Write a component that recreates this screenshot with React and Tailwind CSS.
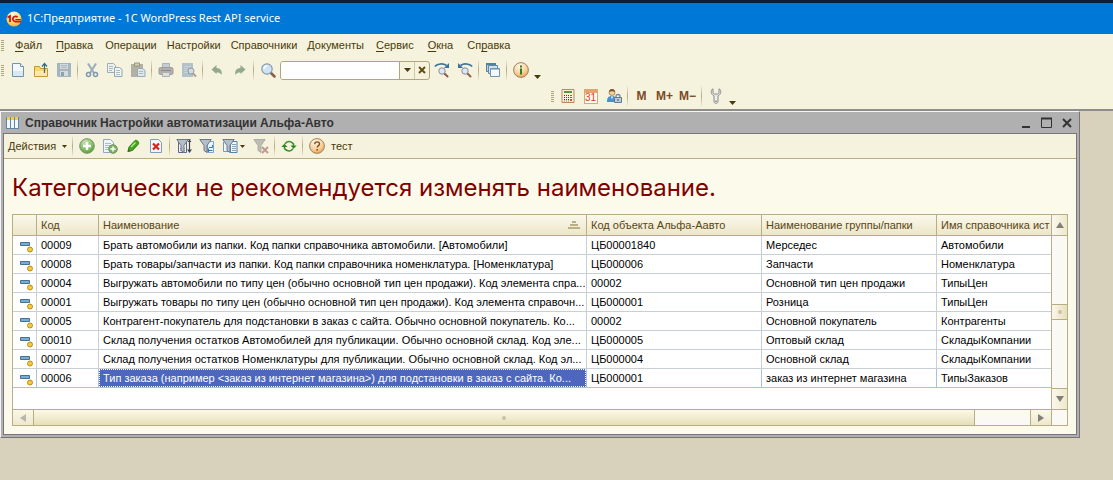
import clsx from "clsx";

const MENU = [
  { before: "", key: "Ф", after: "айл" },
  { before: "", key: "П", after: "равка" },
  { before: "Операции" },
  { before: "Настройки" },
  { before: "Справочники" },
  { before: "Документы" },
  { before: "", key: "С", after: "ервис" },
  { before: "", key: "О", after: "кна" },
  { before: "Сп", key: "р", after: "авка" },
];

const ROWS = [
  ["00009", "Брать автомобили из папки. Код папки справочника автомобили. [Автомобили]", "ЦБ00001840", "Мерседес", "Автомобили"],
  ["00008", "Брать товары/запчасти из папки. Код папки справочника номенклатура. [Номенклатура]", "ЦБ000006", "Запчасти", "Номенклатура"],
  ["00004", "Выгружать автомобили по типу цен (обычно основной тип цен продажи). Код элемента спра...", "00002", "Основной тип цен продажи", "ТипыЦен"],
  ["00001", "Выгружать товары по типу цен (обычно основной тип цен продажи). Код элемента справочн...", "ЦБ000001", "Розница", "ТипыЦен"],
  ["00005", "Контрагент-покупатель для подстановки в заказ с сайта. Обычно основной покупатель. Ко...", "00002", "Основной покупатель", "Контрагенты"],
  ["00010", "Склад получения остатков Автомобилей для публикации. Обычно основной склад. Код эле...", "ЦБ000005", "Оптовый склад", "СкладыКомпании"],
  ["00007", "Склад получения остатков Номенклатуры для публикации. Обычно основной склад. Код эл...", "ЦБ000004", "Основной склад", "СкладыКомпании"],
  ["00006", "Тип заказа (например <заказ из интернет магазина>) для подстановки в заказ с сайта. Ко...", "ЦБ000001", "заказ из интернет магазина", "ТипыЗаказов"],
];

const SELECTED = "00006";

/* ---------- icons, all on a 16x16 grid ---------- */

function Icon({ children, className }) {
  return (
    <svg viewBox="0 0 16 16" className={clsx("h-4 w-4 shrink-0", className)} fill="none" aria-hidden="true">
      {children}
    </svg>
  );
}

const Caret = () => (
  <svg viewBox="0 0 7 4" className="h-1 w-[7px] shrink-0" aria-hidden="true">
    <path d="M0 0h7L3.500 4z" fill="#4a3a0a" />
  </svg>
);

const SmallCaret = () => (
  <svg viewBox="0 0 5 3" className="h-[3px] w-[5px] shrink-0" aria-hidden="true">
    <path d="M0 0h5L2.500 3z" fill="#4a3a0a" />
  </svg>
);

const NewIcon = () => (
  <Icon>
    <path d="M2.500 1.500h8l3 3v10h-11z" fill="#f3f8fc" stroke="#6f93b1" />
    <path d="M3 9h10v5H3z" fill="#dbe8f3" />
    <path d="M10.500 1.500v3h3" fill="#fff" stroke="#6f93b1" />
  </Icon>
);

const OpenIcon = () => (
  <Icon>
    <path d="M1.500 14.500v-10h5l1 2h7v8z" fill="#f5d778" stroke="#c2983c" />
    <path d="M2 9h12v5H2z" fill="#fbe9a5" />
    <path d="M11.500 11V2M9 4.500l2.500-3 2.500 3" stroke="#34698c" strokeWidth="1.200" />
  </Icon>
);

const SaveIcon = () => (
  <Icon>
    <path d="M1 1h14v14H2l-1-1z" fill="#a4b5bf" />
    <path d="M4 2h8v5H4z" fill="#d3dbdb" />
    <path d="M5 3.500h6M5 5.500h6" stroke="#a4b5bf" />
    <path d="M4 9h8v5H4z" fill="#d3dbdb" />
    <path d="M5 10h3v4H5z" fill="#8fa2ab" />
  </Icon>
);

const CutIcon = () => (
  <Icon>
    <path d="M4 1.500l6 9.500M12 1.500L6 11" stroke="#9bb0be" strokeWidth="2.200" />
    <circle cx="4.500" cy="12.500" r="2" stroke="#7f99af" strokeWidth="1.500" />
    <circle cx="11.500" cy="12.500" r="2" stroke="#7f99af" strokeWidth="1.500" />
  </Icon>
);

const CopyIcon = () => (
  <Icon>
    <path d="M.5 1.500h6l2 2v7h-8z" fill="#edf0eb" stroke="#9bb0bd" />
    <path d="M2 4.500h4M2 6.500h4M2 8.500h3" stroke="#a9bbc5" />
    <path d="M7.500 5.500h5l2.500 2v7H7.500z" fill="#f2f4ef" stroke="#91a8b7" />
    <path d="M9 8.500h4M9 10.500h4M9 12.500h4" stroke="#a9bbc5" />
  </Icon>
);

const PasteIcon = () => (
  <Icon>
    <path d="M1 2h12v13H1z" fill="#b1b1a4" />
    <path d="M4.500 1h5v3h-5z" fill="#d6d3b4" stroke="#96937a" />
    <path d="M7.500 6.500h5l2.500 2v6H7.500z" fill="#dee6e8" stroke="#94abb9" />
    <path d="M9 9.500h4M9 11.500h4" stroke="#a9bbc5" />
  </Icon>
);

const PrintIcon = () => (
  <Icon>
    <path d="M4.500 6V1.500h7V6" fill="#c3ced4" stroke="#a9b3b7" />
    <rect x="1" y="5.500" width="14" height="7" rx="1.500" fill="#b4aeaa" stroke="#a29c98" />
    <path d="M3 8.500h10" stroke="#8f8a85" />
    <path d="M4.500 10.500h7v4h-7z" fill="#dcdfda" stroke="#a9b3b7" />
  </Icon>
);

const PreviewIcon = () => (
  <Icon>
    <path d="M1 1h11v14H1z" fill="#b3c1ca" />
    <path d="M3 4.500h7M3 6.500h4M3 8.500h3M3 10.500h4" stroke="#c9d3d6" />
    <circle cx="10" cy="9" r="3" fill="#d2dcdf" stroke="#8d9ca6" />
    <path d="M12 11.500l3 3" stroke="#b39c8c" strokeWidth="2" />
  </Icon>
);

const UndoIcon = () => (
  <Icon>
    <path d="M2.500 7.500l5-4.500v3c4 .2 6 3 5 7-1-2-2.500-2.500-5-2.500V12z" fill="#93a98c" />
  </Icon>
);

const RedoIcon = () => (
  <Icon>
    <path d="M13.500 7.500l-5-4.500v3c-4 .2-6 3-5 7 1-2 2.500-2.500 5-2.500V12z" fill="#93a98c" />
  </Icon>
);

const SearchIcon = () => (
  <Icon>
    <path d="M10.500 10.500l4 4" stroke="#8b5f45" strokeWidth="2.500" strokeLinecap="round" />
    <circle cx="7" cy="7" r="5.200" fill="#cfe3f6" stroke="#8a98ad" strokeWidth="1.200" />
    <path d="M4 7a3 3 0 013-3" stroke="#fff" strokeWidth="1.500" />
  </Icon>
);

const FindNextIcon = () => (
  <Icon>
    <path d="M10.500 11.500l3 3" stroke="#8b5f45" strokeWidth="2" strokeLinecap="round" />
    <circle cx="8" cy="9" r="3.200" fill="#dbe9f6" stroke="#8d8a99" />
    <path d="M.8 4.500C3.500 1.500 9 1 12.500 3.500" stroke="#38729a" strokeWidth="1.600" />
    <path d="M15 1v5h-5z" fill="#38729a" />
  </Icon>
);

const FindPrevIcon = () => (
  <Icon>
    <path d="M10.500 11.500l3 3" stroke="#8b5f45" strokeWidth="2" strokeLinecap="round" />
    <circle cx="8" cy="9" r="3.200" fill="#dbe9f6" stroke="#8d8a99" />
    <path d="M15.200 4.500C12.500 1.500 7 1 3.500 3.500" stroke="#38729a" strokeWidth="1.600" />
    <path d="M1 1v5h5z" fill="#38729a" />
  </Icon>
);

const WindowsIcon = () => (
  <Icon>
    <path d="M1.500 1.500h9v8h-9z" fill="#b9cfe0" stroke="#54809f" />
    <path d="M1 1h10v2H1z" fill="#54809f" />
    <path d="M3.500 3.500h9v8h-9z" fill="#d3e1ec" stroke="#5f88a6" />
    <path d="M5.500 6.500h9v8h-9z" fill="#f6f9fc" stroke="#6f94b0" />
    <path d="M6 7.500h8" stroke="#a9c5da" />
  </Icon>
);

const AmberDisc = ({ id }) => (
  <>
    <defs>
      <radialGradient id={id} cx="0.4" cy="0.25" r="0.8">
        <stop offset="0" stopColor="#fff8e8" />
        <stop offset="0.6" stopColor="#f9d09a" />
        <stop offset="1" stopColor="#ee9f4e" />
      </radialGradient>
    </defs>
    <circle cx="8" cy="8" r="7.400" fill={`url(#${id})`} stroke="#9c8468" />
  </>
);

const InfoIcon = () => (
  <Icon>
    <AmberDisc id="amber-info" />
    <path d="M7 6.500h2v6H7zM7 3.500h2v2H7z" fill="#2f7d22" />
  </Icon>
);

const CalcIcon = () => (
  <Icon>
    <path d="M2 1.500h12v13H2z" fill="#faf0da" stroke="#b58a5e" />
    <path d="M4 3h8v2H4z" fill="#4f9b44" />
    <path d="M4 7.500h5M4 9.500h5M4 11.500h5" stroke="#4a3d30" strokeDasharray="1 1" />
    <path d="M4 13h5" stroke="#8a7a68" strokeDasharray="1 1" />
    <path d="M10 7.500h2M10 9.500h2" stroke="#3c8d37" />
    <path d="M10 12h2" stroke="#d4512b" strokeWidth="2" />
  </Icon>
);

const CalendarIcon = () => (
  <span className="flex h-[15px] w-[14px] flex-col overflow-hidden border border-[#d7a879] bg-[#fffaf0]">
    <span className="h-[3px] shrink-0 bg-[#e8a36c]" />
    <span className="text-center text-[10px] leading-[10px] text-[#de3a1c]">31</span>
  </span>
);

const UserIcon = () => (
  <Icon>
    <circle cx="6" cy="4.500" r="3" fill="#f3cf9b" stroke="#a07a4c" strokeWidth=".8" />
    <path d="M3 4c0-4 6-4 6 0-2-1-4-1-6 0z" fill="#7b552c" />
    <path d="M1 14c0-4 1-6 5-6s4 2 4 6z" fill="#4a8fc7" />
    <path d="M5 8.500h2l-1 3z" fill="#fff" />
    <path d="M10 10V8.500a2 2 0 014 0V10" stroke="#7b8893" strokeWidth="1.300" />
    <path d="M8.500 9.500h7v5h-7z" fill="#bccbd8" stroke="#647b8f" />
    <path d="M12 11v2" stroke="#40556a" />
  </Icon>
);

const WrenchIcon = () => (
  <Icon>
    <path
      d="M5 .8C3 1.500 2.500 5 4.500 6.800L6 8v5.500c0 2.500 4 2.500 4 0V8l1.500-1.200C13.500 5 13 1.500 11 .8v4L9.500 6h-3L5 4.800z"
      fill="#e2e2e0"
      stroke="#8d8d8d"
    />
    <path d="M8 8v4" stroke="#fff" />
    <circle cx="8" cy="13.200" r=".8" fill="#777" />
  </Icon>
);

const AddIcon = () => (
  <Icon>
    <defs>
      <radialGradient id="leaf" cx="0.4" cy="0.25" r="0.8">
        <stop offset="0" stopColor="#c9e6b4" />
        <stop offset="0.7" stopColor="#77b856" />
        <stop offset="1" stopColor="#559a3a" />
      </radialGradient>
    </defs>
    <circle cx="8" cy="8" r="7.300" fill="url(#leaf)" stroke="#7b8f72" />
    <path d="M4 8h8M8 4v8" stroke="#fff" strokeWidth="2.400" />
  </Icon>
);

const AddCopyIcon = () => (
  <Icon>
    <path d="M1.500 1.500h7l3 3v10h-10z" fill="#f2f6f9" stroke="#93a9ba" />
    <path d="M3 5.500h6M3 7.500h6M3 9.500h4M3 11.500h3" stroke="#a9bccb" />
    <circle cx="11" cy="11" r="4.300" fill="#77b856" stroke="#7b8f72" />
    <path d="M8.500 11h5M11 8.500v5" stroke="#fff" strokeWidth="1.500" />
  </Icon>
);

const PencilIcon = () => (
  <Icon>
    <path d="M3 13.500l1-4.500 6-6.500c1.500-1 4.500 1.500 3.500 3.500L7.500 12.500z" fill="#46a51f" stroke="#2d8412" />
    <path d="M6 9l4.500-4.500" stroke="#b4e88c" strokeWidth="1.500" />
    <path d="M2.500 14l1-3L5.500 13z" fill="#554" />
  </Icon>
);

const DeleteIcon = () => (
  <Icon>
    <path d="M2.500 1.500h8l3 3v10h-11z" fill="#f2f6f9" stroke="#7d9db8" />
    <path d="M5 5.500l6 6M11 5.500l-6 6" stroke="#d5231b" strokeWidth="2.200" />
  </Icon>
);

const Funnel = ({ fill = "#b4bec8", stroke = "#6c7a88" }) => (
  <path d="M.8 1.500h11.400L8 7.500v7L5 12.500v-5z" fill={fill} stroke={stroke} />
);

const FilterSetIcon = () => (
  <Icon>
    <path d="M2.500 3v11.500h8V3" fill="#eef2f5" stroke="#5b6b7a" />
    <path d="M4 10.500h5M4 12.500h5" stroke="#8fa1b0" />
    <path d="M1 1.500h13.500" stroke="#4d5b69" />
    <Funnel />
    <path d="M13.500 3v10" stroke="#3a4856" strokeWidth="1.200" />
    <path d="M11 11.500h5L13.500 15zM11.500 4h4l-2-2.500z" fill="#3a4856" />
  </Icon>
);

const FilterCurrentIcon = () => (
  <Icon>
    <path d="M8.500 3.500h6v11h-6z" fill="#eaf3fa" stroke="#7fa6c4" />
    <Funnel />
    <path d="M10 9.500h3.500M9.500 12.500h4" stroke="#2e7bb5" />
    <path d="M13.500 7v2.500M9.500 10.500v3.500" stroke="#2e7bb5" />
  </Icon>
);

const FilterHistoryIcon = () => (
  <Icon>
    <path d="M1.500 4v9.500h6V4" fill="#eef4f9" stroke="#7c98ad" />
    <path d="M8.500 3.500h6.500v11H8.500z" fill="#f3f8fc" stroke="#4f83ab" />
    <path d="M10 6.500h4M10 8.500h4M10 10.500h4M10 12.500h4" stroke="#7fa3be" />
    <Funnel />
  </Icon>
);

const FilterOffIcon = () => (
  <Icon>
    <Funnel fill="#bdbdb6" stroke="#aeaea6" />
    <path d="M9 9l6 6M15 9l-6 6" stroke="#c09a92" strokeWidth="2" />
  </Icon>
);

const RefreshIcon = () => (
  <Icon>
    <path d="M4 6c1.500-3 6-3.500 8.500 0v2M12 10.500c-1.500 3-6 3.500-8.500 0v-2" stroke="#3b8f2c" strokeWidth="1.600" />
    <path d="M9.500 7.500h6.200l-3.100 3.300zM.3 9h6.200L3.400 5.700z" fill="#2c8a1d" />
  </Icon>
);

const HelpIcon = () => (
  <Icon>
    <AmberDisc id="amber-help" />
    <path d="M5.700 6.200c0-3 4.800-3 4.800-.3 0 1.700-2.300 1.700-2.300 3.600" stroke="#7a5220" strokeWidth="1.400" />
    <path d="M7.400 11h1.600v1.500H7.400z" fill="#7a5220" />
  </Icon>
);

const RowIcon = () => (
  <svg viewBox="0 0 14 12" className="mt-[3px] ml-[7px] block h-3 w-[14px]" aria-hidden="true">
    <path d="M.5 1.500h9v3h-9z" fill="#78add6" stroke="#46708f" />
    <circle cx="10" cy="8.500" r="2.500" fill="#f6c93c" stroke="#b98d1a" />
  </svg>
);

const AppLogo = () => (
  <svg viewBox="0 0 16 16" className="h-4 w-4 shrink-0" aria-hidden="true">
    <defs>
      <radialGradient id="sun" cx="0.45" cy="0.2" r="0.9">
        <stop offset="0" stopColor="#fffbe0" />
        <stop offset="0.6" stopColor="#fbd95f" />
        <stop offset="1" stopColor="#ee9c2c" />
      </radialGradient>
    </defs>
    <circle cx="8" cy="8" r="7.500" fill="url(#sun)" />
    <path d="M1.500 6.500L4 5v6" fill="none" stroke="#d8151b" strokeWidth="1.800" />
    <path d="M11.500 6.300a2.600 2.600 0 10-2.300 4.200H15" fill="none" stroke="#d8151b" strokeWidth="1.800" />
    <path d="M9.300 8.500H15" stroke="#d8151b" />
  </svg>
);

const TableIcon = () => (
  <svg viewBox="0 0 13 12" className="h-3 w-[13px] shrink-0" aria-hidden="true">
    <path d="M0 0h13v12H0z" fill="#5f86a6" />
    <path d="M1 3h3v8H1zM5 3h3v8H5zM9 3h3v8H9z" fill="#f1f7fb" />
    <path d="M1 0h3v3H1zM5 0h3v3H5zM9 0h3v3H9z" fill="#f4cf4c" />
  </svg>
);

/* ---------- toolbar pieces ---------- */

const Grip = () => (
  <span className="mr-[2px] flex h-[11px] w-[3px] shrink-0 flex-col justify-between">
    {[0, 1, 2, 3, 4, 5].map((n) => (
      <span key={n} className="h-px bg-[#b0a67c]" />
    ))}
  </span>
);

const Separator = () => (
  <span className="flex h-[22px] w-[5px] shrink-0 justify-center">
    <span className="w-px bg-linear-to-b from-[#f5f2dd] via-[#b5ab84] to-[#f5f2dd]" />
  </span>
);

function ToolButton({ label, icon: Glyph, disabled }) {
  return (
    <button
      type="button"
      aria-label={label}
      disabled={disabled}
      className="flex h-[22px] w-[23px] shrink-0 items-center justify-center"
    >
      <Glyph />
    </button>
  );
}

const MemoryButton = ({ text }) => (
  <button
    type="button"
    className="flex h-[22px] w-[23px] shrink-0 items-center justify-center text-[12px] font-bold text-[#7a4a26]"
  >
    {text}
  </button>
);

const MoreButton = () => (
  <button type="button" aria-label="Ещё" className="flex h-[22px] w-[11px] shrink-0 items-end justify-center pb-[2px]">
    <Caret />
  </button>
);

function MainToolbar() {
  return (
    <div className="flex h-[26px] items-center pl-px">
      <Grip />
      <ToolButton label="Новый" icon={NewIcon} />
      <ToolButton label="Открыть" icon={OpenIcon} />
      <ToolButton label="Сохранить" icon={SaveIcon} disabled />
      <Separator />
      <ToolButton label="Вырезать" icon={CutIcon} disabled />
      <ToolButton label="Копировать" icon={CopyIcon} disabled />
      <ToolButton label="Вставить" icon={PasteIcon} disabled />
      <Separator />
      <ToolButton label="Печать" icon={PrintIcon} disabled />
      <ToolButton label="Просмотр" icon={PreviewIcon} disabled />
      <Separator />
      <ToolButton label="Отменить" icon={UndoIcon} disabled />
      <ToolButton label="Вернуть" icon={RedoIcon} disabled />
      <Separator />
      <ToolButton label="Найти" icon={SearchIcon} />
      <div className="ml-px flex h-[19px] w-[150px] shrink-0 overflow-hidden rounded-[3px] border border-[#b0a67c] bg-[#f5f2dd]">
        <input type="text" aria-label="Строка поиска" className="w-0 flex-1 bg-white px-1 text-[11px] outline-none" />
        <button type="button" aria-label="Список" className="flex w-[15px] items-center justify-center border-l border-[#b0a67c]">
          <Caret />
        </button>
        <button type="button" aria-label="Очистить" className="flex w-[15px] items-center justify-center border-l border-[#cfc8a4]">
          <svg viewBox="0 0 8 8" className="h-2 w-2" aria-hidden="true">
            <path d="M1 1l6 6M7 1L1 7" stroke="#5a4a0c" strokeWidth="1.800" />
          </svg>
        </button>
      </div>
      <ToolButton label="Найти следующее" icon={FindNextIcon} />
      <ToolButton label="Найти предыдущее" icon={FindPrevIcon} />
      <Separator />
      <ToolButton label="Окна" icon={WindowsIcon} />
      <Separator />
      <ToolButton label="О программе" icon={InfoIcon} />
      <MoreButton />
    </div>
  );
}

function ServiceToolbar() {
  return (
    <div className="flex h-[26px] items-center pl-[551px]">
      <Grip />
      <ToolButton label="Калькулятор" icon={CalcIcon} />
      <ToolButton label="Календарь" icon={CalendarIcon} />
      <ToolButton label="Пользователь" icon={UserIcon} />
      <Separator />
      <MemoryButton text="M" />
      <MemoryButton text="M+" />
      <MemoryButton text="M−" />
      <Separator />
      <ToolButton label="Сервис" icon={WrenchIcon} />
      <MoreButton />
    </div>
  );
}

function ListToolbar() {
  return (
    <div className="flex h-[25px] items-center border-b border-[#b8ad84] bg-[#f5f2dd] pl-1 text-[11px] text-[#4a3a0a]">
      <button type="button" className="flex w-[62px] shrink-0 items-center justify-between pr-[3px]">
        Действия
        <SmallCaret />
      </button>
      <Separator />
      <ToolButton label="Добавить" icon={AddIcon} />
      <ToolButton label="Добавить копированием" icon={AddCopyIcon} />
      <ToolButton label="Изменить" icon={PencilIcon} />
      <ToolButton label="Пометить на удаление" icon={DeleteIcon} />
      <Separator />
      <ToolButton label="Отбор и сортировка" icon={FilterSetIcon} />
      <ToolButton label="Отбор по значению" icon={FilterCurrentIcon} />
      <button type="button" aria-label="История отборов" className="flex h-[22px] w-[31px] shrink-0 items-center gap-[2px] pl-1">
        <FilterHistoryIcon />
        <SmallCaret />
      </button>
      <ToolButton label="Отключить отбор" icon={FilterOffIcon} disabled />
      <Separator />
      <ToolButton label="Обновить" icon={RefreshIcon} />
      <Separator />
      <ToolButton label="Справка" icon={HelpIcon} />
      <button type="button" className="px-[3px]">
        тест
      </button>
    </div>
  );
}

/* ---------- list ---------- */

const SortMark = () => (
  <svg viewBox="0 0 12 8" className="h-2 w-3 shrink-0" aria-hidden="true">
    <path d="M4 0h4v2H4zM2 3h8v2H2zM0 6h12v2H0z" fill="#b9b083" />
  </svg>
);

function HeadCell({ children, sorted }) {
  return (
    <th scope="col" className="h-[21px] overflow-hidden border-r border-b border-[#b8ad84] p-0 font-normal whitespace-nowrap last:border-r-0">
      <div className="flex items-center justify-between pr-[6px] pl-1">
        {children}
        {sorted && <SortMark />}
      </div>
    </th>
  );
}

function ListTable() {
  return (
    <table className="w-full table-fixed border-separate border-spacing-0 self-start text-left text-[11px] leading-[18px] text-black">
      <colgroup>
        <col className="w-6" />
        <col className="w-[62px]" />
        <col className="w-[488px]" />
        <col className="w-[175px]" />
        <col className="w-[175px]" />
        <col />
      </colgroup>
      <thead className="bg-linear-to-b from-[#faf8ec] to-[#ece6c6] text-[#5a4614]">
        <tr>
          <HeadCell />
          <HeadCell>Код</HeadCell>
          <HeadCell sorted>Наименование</HeadCell>
          <HeadCell>Код объекта Альфа-Аавто</HeadCell>
          <HeadCell>Наименование группы/папки</HeadCell>
          <HeadCell>Имя справочника ист</HeadCell>
        </tr>
      </thead>
      <tbody>
        {ROWS.map((row) => {
          const selected = row[0] === SELECTED;
          const line = selected ? "border-[#a9c0de]" : "border-[#c8d0d4]";
          return (
            <tr key={row[0]}>
              <td className={clsx("h-[19px] border-r border-b p-0", line)}>
                <RowIcon />
              </td>
              {row.map((text, i) => (
                <td
                  key={i}
                  className={clsx("overflow-hidden border-r border-b p-0 whitespace-nowrap last:border-r-0", line)}
                >
                  <div
                    className={clsx(
                      "overflow-hidden pl-1",
                      selected && i === 1 && "bg-[#4d67bf] text-white outline-1 -outline-offset-1 outline-dotted outline-white"
                    )}
                  >
                    {text}
                  </div>
                </td>
              ))}
            </tr>
          );
        })}
      </tbody>
    </table>
  );
}

const Arrow = ({ d, fill = "#807f78" }) => (
  <svg viewBox="0 0 8 8" className="h-2 w-2" aria-hidden="true">
    <path d={d} fill={fill} />
  </svg>
);

function VerticalScroll() {
  return (
    <div className="flex flex-col border-l border-[#b8ad84] bg-[#faf9f4]">
      <button type="button" aria-label="Вверх" className="flex h-[21px] items-center justify-center border-b border-[#b8ad84] bg-linear-to-r from-[#faf8ec] to-[#eee8cc]">
        <Arrow d="M4 1l4 6H0z" />
      </button>
      <div className="flex-1" />
      <div className="flex h-4 items-center justify-center border-y border-[#b8ad84] bg-linear-to-r from-[#faf8ec] to-[#e6dfba]">
        <span className="h-1 w-1 rounded-full bg-[#c9c2a0]" />
      </div>
      <div className="flex-1" />
      <button type="button" aria-label="Вниз" className="flex h-[21px] items-center justify-center border-t border-[#b8ad84] bg-linear-to-r from-[#faf8ec] to-[#eee8cc]">
        <Arrow d="M4 7l4-6H0z" />
      </button>
    </div>
  );
}

function HorizontalScroll() {
  return (
    <div className="flex border-t border-[#b8ad84] bg-[#faf9f4]">
      <button type="button" aria-label="Влево" className="flex w-[21px] items-center justify-center border-r border-[#b8ad84] bg-linear-to-b from-[#faf8ec] to-[#eee8cc]">
        <Arrow d="M1 4l6-4v8z" fill="#b9b7a8" />
      </button>
      <div className="flex flex-1 items-center justify-center border-r border-[#b8ad84] bg-linear-to-b from-[#faf8ec] via-[#f1ecd0] to-[#e6dfba]">
        <span className="h-1 w-1 rounded-full bg-[#c9c2a0]" />
      </div>
      <div className="w-[55px]" />
      <button type="button" aria-label="Вправо" className="flex w-[21px] items-center justify-center border-l border-[#b8ad84] bg-linear-to-b from-[#faf8ec] to-[#eee8cc]">
        <Arrow d="M7 4L1 0v8z" />
      </button>
    </div>
  );
}

function CatalogWindow() {
  return (
    <section className="mr-[33px] border border-[#77757a] border-t-[#f4f4f4] border-l-[#f4f4f4] bg-[#b0b0b0] px-[2px] pb-[2px]">
      <header className="flex h-[21px] items-center pr-1 pl-[3px]">
        <TableIcon />
        <h2 className="ml-[6px] flex-1 truncate text-[12px] font-bold text-[#333]">
          Справочник Настройки автоматизации Альфа-Авто
        </h2>
        <div className="flex items-center gap-2">
          <button type="button" aria-label="Свернуть">
            <svg viewBox="0 0 12 12" className="h-3 w-3">
              <path d="M1 10h8" stroke="#333" strokeWidth="2" />
            </svg>
          </button>
          <button type="button" aria-label="Развернуть">
            <svg viewBox="0 0 12 12" className="h-3 w-3">
              <path d="M.5 1.500h10v9H.5z" fill="none" stroke="#333" />
              <path d="M0 1.500h11" stroke="#333" strokeWidth="2" />
            </svg>
          </button>
          <button type="button" aria-label="Закрыть">
            <svg viewBox="0 0 12 12" className="h-3 w-3">
              <path d="M2 2l8 8M10 2l-8 8" stroke="#333" strokeWidth="2" />
            </svg>
          </button>
        </div>
      </header>
      <div className="border border-[#77757a] bg-[#fcfaea]">
        <ListToolbar />
        <h1 className="overflow-hidden px-2 pt-[13px] pb-[10px] font-['Inter','Liberation_Sans',sans-serif] text-[24px] leading-8 whitespace-nowrap text-[#800000]">
          Категорически не рекомендуется изменять наименование.
        </h1>
        <div className="mx-2 mb-2 grid grid-cols-[minmax(0,1fr)_16px] grid-rows-[194px_16px] border border-[#b8ad84] bg-white">
          <ListTable />
          <VerticalScroll />
          <HorizontalScroll />
          <div className="border-t border-l border-[#b8ad84] bg-[#faf9f4]" />
        </div>
      </div>
    </section>
  );
}

export default function App() {
  return (
    <div className="min-h-screen overflow-hidden bg-[#d8d2bd] font-['Liberation_Sans',Arial,sans-serif]">
      <div className="h-[3px] bg-[#07203d]" />
      <header className="flex h-[31px] items-center gap-[5px] bg-[#0078d7] pl-[6px]">
        <AppLogo />
        <span className="font-['Noto_Sans','Open_Sans',sans-serif] text-[11px] text-white">
          1C:Предприятие - 1C WordPress Rest API service
        </span>
      </header>
      <div className="border-b-2 border-[#8f8d8c] bg-[#f5f2dd]">
        <nav className="flex h-[23px] items-center pl-px text-[11px] text-[#4a3a0a]">
          <Grip />
          <div className="flex px-[2px]">
            {MENU.map((item) => (
              <button
                key={item.before + item.key}
                type="button"
                className={clsx("shrink-0 whitespace-nowrap", item.key ? "px-[7px]" : "px-[5px]")}
              >
                {item.before}
                {item.key && <u className="underline-offset-2">{item.key}</u>}
                {item.after}
              </button>
            ))}
          </div>
        </nav>
        <MainToolbar />
        <ServiceToolbar />
      </div>
      <CatalogWindow />
    </div>
  );
}
